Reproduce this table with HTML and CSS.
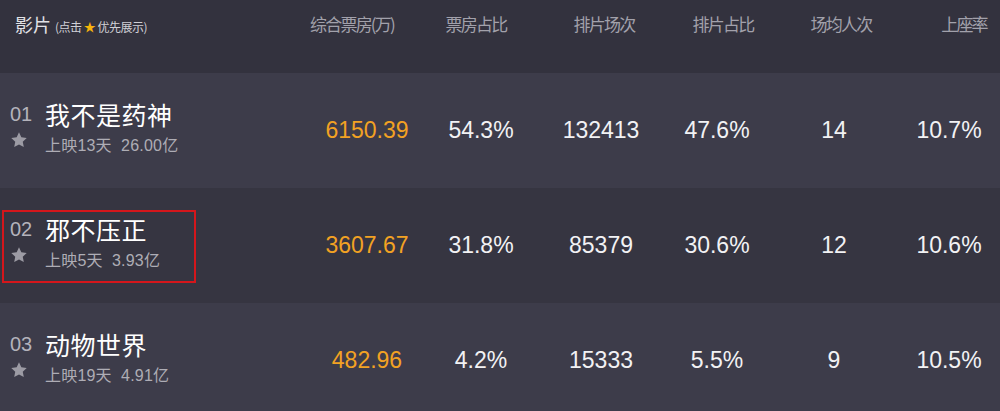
FILE: index.html
```html
<!DOCTYPE html>
<html lang="zh">
<head>
<meta charset="utf-8">
<link rel="stylesheet" href="styles.css">
</head>
<body>
<div class="board">
  <div class="head">
    <div class="h-name"><span class="h-title">影片</span><span class="h-hint">(点击 <span class="h-star">★</span> 优先展示)</span></div>
    <div class="h-col">综合票房(万)</div>
    <div class="h-col">票房占比</div>
    <div class="h-col">排片场次</div>
    <div class="h-col">排片占比</div>
    <div class="h-col">场均人次</div>
    <div class="h-col h-last">上座率</div>
  </div>

  <div class="row odd">
    <div class="name">
      <div class="side"><span class="rank">01</span><svg class="star" viewBox="0 0 24 24"><path d="M12 1.8l3.1 6.6 7.2.9-5.3 5 1.4 7.1L12 17.9l-6.4 3.5 1.4-7.1-5.3-5 7.2-.9z"/></svg></div>
      <div class="info"><div class="title">我不是药神</div><div class="sub">上映13天&nbsp; 26.00亿</div></div>
    </div>
    <div class="val gold">6150.39</div>
    <div class="val">54.3%</div>
    <div class="val">132413</div>
    <div class="val">47.6%</div>
    <div class="val">14</div>
    <div class="val">10.7%</div>
  </div>

  <div class="row even">
    <div class="name marked">
      <div class="side"><span class="rank">02</span><svg class="star" viewBox="0 0 24 24"><path d="M12 1.8l3.1 6.6 7.2.9-5.3 5 1.4 7.1L12 17.9l-6.4 3.5 1.4-7.1-5.3-5 7.2-.9z"/></svg></div>
      <div class="info"><div class="title">邪不压正</div><div class="sub">上映5天&nbsp; 3.93亿</div></div>
    </div>
    <div class="val gold">3607.67</div>
    <div class="val">31.8%</div>
    <div class="val">85379</div>
    <div class="val">30.6%</div>
    <div class="val">12</div>
    <div class="val">10.6%</div>
  </div>

  <div class="row odd">
    <div class="name">
      <div class="side"><span class="rank">03</span><svg class="star" viewBox="0 0 24 24"><path d="M12 1.8l3.1 6.6 7.2.9-5.3 5 1.4 7.1L12 17.9l-6.4 3.5 1.4-7.1-5.3-5 7.2-.9z"/></svg></div>
      <div class="info"><div class="title">动物世界</div><div class="sub">上映19天&nbsp; 4.91亿</div></div>
    </div>
    <div class="val gold">482.96</div>
    <div class="val">4.2%</div>
    <div class="val">15333</div>
    <div class="val">5.5%</div>
    <div class="val">9</div>
    <div class="val">10.5%</div>
  </div>
</div>
</body>
</html>
```

FILE: styles.css
```css
* { box-sizing: border-box; }
html, body { margin: 0; padding: 0; }
body {
  width: 1000px;
  height: 411px;
  overflow: hidden;
  background: #3d3c4a;
  font-family: "Liberation Sans", "Noto Sans CJK SC", sans-serif;
}
.board { width: 1000px; }

.head {
  display: grid;
  grid-template-columns: 290px 124px 124px 132px 106px 130px 94px;
  height: 73px;
  background: #33323e;
  align-items: start;
  padding-top: 11px;
}
.h-name {
  padding-left: 15px;
  display: flex;
  align-items: baseline;
  gap: 4px;
}
.h-title {
  font-family: "Noto Sans CJK SC", sans-serif;
  font-size: 18px;
  line-height: 26px;
  color: #e2e2e6;
}
.h-hint {
  font-family: "Noto Sans CJK SC", sans-serif;
  font-size: 12px;
  color: #d0d0d6;
  letter-spacing: -0.5px;
}
.h-star { color: #f5b30c; font-size: 12px; }
.h-col {
  text-align: center;
  font-family: "Noto Sans CJK SC", sans-serif;
  font-size: 17px;
  line-height: 26px;
  letter-spacing: -1.8px;
  color: #a2a1ab;
}
.h-last { padding-left: 22px; }

.row {
  display: grid;
  grid-template-columns: 310px 114px 114px 126px 106px 128px 102px;
  height: 115px;
  align-items: center;
}
.odd { background: #3d3c4a; }
.even { background: #363541; }

.name {
  position: relative;
  display: flex;
  align-items: flex-start;
  padding-left: 10px;
  height: 100%;
  padding-top: 26px;
}
.marked::after {
  content: "";
  position: absolute;
  left: 2px;
  top: 22px;
  width: 190px;
  height: 69px;
  border: 2px solid #d4161b;
}
.side {
  width: 35px;
  display: flex;
  flex-direction: column;
  align-items: flex-start;
  padding-top: 2px;
}
.rank {
  font-size: 20px;
  line-height: 26px;
  color: #b4b3bb;
}
.star {
  width: 18px;
  height: 18px;
  margin-top: 4px;
  fill: #9c9ba4;
}
.info { display: flex; flex-direction: column; }
.title {
  font-family: "Noto Sans CJK SC", sans-serif;
  font-size: 25px;
  line-height: 30px;
  color: #ffffff;
  letter-spacing: 0.5px;
}
.sub {
  font-family: "Liberation Sans", "Noto Sans CJK SC", sans-serif;
  font-size: 16px;
  line-height: 22px;
  margin-top: 6px;
  color: #aeadb5;
  letter-spacing: 0.2px;
}
.val {
  text-align: center;
  font-size: 23px;
  color: #f2f2f4;
}
.gold { color: #f2a223; }
```
